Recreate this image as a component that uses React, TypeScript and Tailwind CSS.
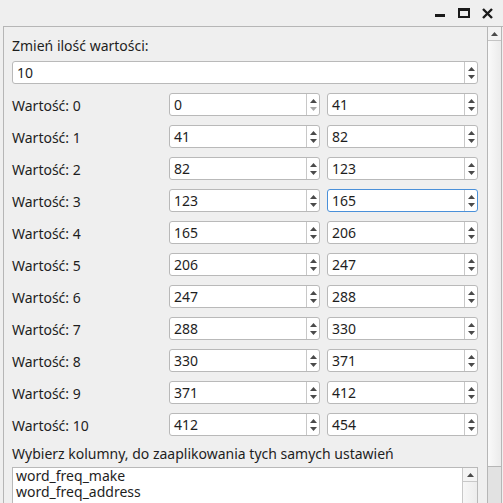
import React from 'react';

const rows = [
  [0, 41],
  [41, 82],
  [82, 123],
  [123, 165],
  [165, 206],
  [206, 247],
  [247, 288],
  [288, 330],
  [330, 371],
  [371, 412],
  [412, 454],
];

function Arrow({ up, dim }: { up?: boolean; dim?: boolean }) {
  return (
    <svg width="7" height="4" viewBox="0 0 7 4" className="block">
      <path
        d={up ? 'M0 4 L3.5 0 L7 4 Z' : 'M0 0 L3.5 4 L7 0 Z'}
        fill={dim ? '#a8a8a8' : '#4a4a4a'}
      />
    </svg>
  );
}

function SpinBox({
  value,
  focused,
  downDim,
}: {
  value: number;
  focused?: boolean;
  downDim?: boolean;
}) {
  return (
    <div
      className={`flex h-[23px] w-full items-stretch rounded-[3px] border bg-white ${
        focused ? 'border-[#4a90d9]' : 'border-[#b9b9b9]'
      }`}
    >
      <div className="flex flex-1 items-center pl-[4px] text-[14px] text-[#1e1e1e]">
        {value}
      </div>
      <div className="flex w-[13px] flex-col items-center justify-center gap-[4px] border-l border-[#c8c8c8]">
        <Arrow up />
        <Arrow dim={downDim} />
      </div>
    </div>
  );
}

export default function App() {
  return (
    <div
      className="flex h-[503px] w-[503px] flex-col overflow-hidden bg-[#efefef] text-[#1e1e1e]"
      style={{ fontFamily: '"Noto Sans", "Open Sans", sans-serif' }}
    >
      {/* title bar */}
      <div className="flex h-[26px] shrink-0 items-center justify-end pr-[10px]">
        <div className="mr-[13px] mt-[5px] h-[3px] w-[10px] bg-[#1a1a1a]" />
        <div className="mr-[12px] h-[10px] w-[12px] border-x-2 border-b-2 border-t-[3px] border-[#1a1a1a]" />
        <svg width="11" height="11" viewBox="0 0 11 11">
          <path d="M1 1 L10 10 M10 1 L1 10" stroke="#1a1a1a" strokeWidth="2.4" />
        </svg>
      </div>

      <div className="ml-[3px] flex flex-1 border-t border-l border-[#b6b6b6]">
        {/* content */}
        <div className="flex w-[483px] flex-col pl-[8px] pt-[10px]">
          <div className="h-[18px] text-[14px] leading-[18px]">Zmień ilość wartości:</div>
          <div className="mt-[6px] w-[466px]">
            <SpinBox value={10} />
          </div>

          <div className="mt-[9px] grid w-[466px] grid-cols-[150px_151px_151px] gap-x-[7px] gap-y-[9px]">
            {rows.map(([a, b], i) => (
              <React.Fragment key={i}>
                <div className="flex items-center pt-[1px] text-[14px]">Wartość: {i}</div>
                <SpinBox value={a} downDim={a === 0} />
                <SpinBox value={b} focused={i === 3} />
              </React.Fragment>
            ))}
          </div>

          <div className="mt-[9px] h-[18px] text-[14px] leading-[18px]">
            Wybierz kolumny, do zaaplikowania tych samych ustawień
          </div>
          <div className="mt-[4px] flex h-[60px] w-[466px] border border-[#b9b9b9] bg-white">
            <div className="flex-1 pl-[3px] text-[14px] leading-[16px]">
              <div>word_freq_make</div>
              <div>word_freq_address</div>
            </div>
            <div className="flex w-[15px] flex-col border-l border-[#c8c8c8]">
              <div className="flex h-[14px] items-center justify-center border-b border-[#c8c8c8] bg-[#f4f4f4]">
                <Arrow up />
              </div>
              <div className="flex-1 bg-gradient-to-r from-[#f7f7f7] to-[#ececec]" />
            </div>
          </div>
        </div>

        {/* outer scrollbar */}
        <div className="flex w-[15px] flex-col border-x border-[#b6b6b6]">
          <div className="flex h-[14px] items-center justify-center border-b border-[#c4c4c4] bg-[#f2f2f2]">
            <Arrow up />
          </div>
          <div className="h-[426px] border-b border-[#b6b6b6] bg-gradient-to-r from-[#fafafa] to-[#ebebeb]" />
          <div className="flex-1 bg-[#e2e2e2]" />
        </div>
      </div>
    </div>
  );
}
